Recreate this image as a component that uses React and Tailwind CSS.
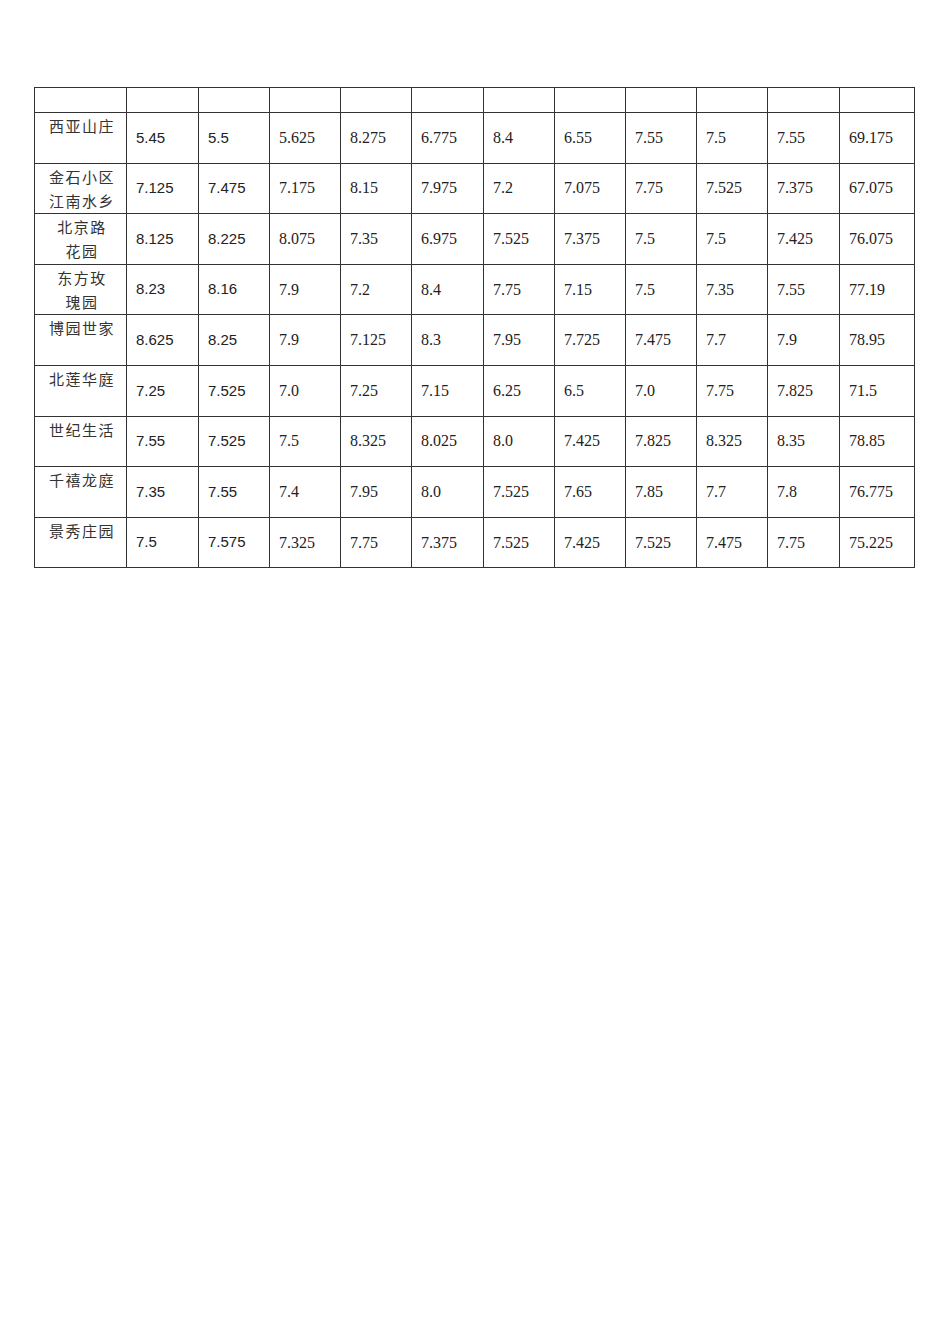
const rows = [
  [['西亚山庄'], ['5.45', '5.5', '5.625', '8.275', '6.775', '8.4', '6.55', '7.55', '7.5', '7.55', '69.175']],
  [['金石小区', '江南水乡'], ['7.125', '7.475', '7.175', '8.15', '7.975', '7.2', '7.075', '7.75', '7.525', '7.375', '67.075']],
  [['北京路', '花园'], ['8.125', '8.225', '8.075', '7.35', '6.975', '7.525', '7.375', '7.5', '7.5', '7.425', '76.075']],
  [['东方玫', '瑰园'], ['8.23', '8.16', '7.9', '7.2', '8.4', '7.75', '7.15', '7.5', '7.35', '7.55', '77.19']],
  [['博园世家'], ['8.625', '8.25', '7.9', '7.125', '8.3', '7.95', '7.725', '7.475', '7.7', '7.9', '78.95']],
  [['北莲华庭'], ['7.25', '7.525', '7.0', '7.25', '7.15', '6.25', '6.5', '7.0', '7.75', '7.825', '71.5']],
  [['世纪生活'], ['7.55', '7.525', '7.5', '8.325', '8.025', '8.0', '7.425', '7.825', '8.325', '8.35', '78.85']],
  [['千禧龙庭'], ['7.35', '7.55', '7.4', '7.95', '8.0', '7.525', '7.65', '7.85', '7.7', '7.8', '76.775']],
  [['景秀庄园'], ['7.5', '7.575', '7.325', '7.75', '7.375', '7.525', '7.425', '7.525', '7.475', '7.75', '75.225']],
];

const widths = [92, 72, 71, 71, 71, 72, 71, 71, 71, 71, 72, 75];

export default function App() {
  return (
    <div className="min-h-[1344px] w-[950px] bg-white pt-[87px] pl-[34px]">
      <table className="table-fixed border-collapse w-[880px] text-black text-[16px]">
        <colgroup>
          {widths.map((w, i) => (
            <col key={i} style={{ width: w }} />
          ))}
        </colgroup>
        <tbody>
          <tr className="h-[25px]">
            {widths.map((_, i) => (
              <td key={i} className="border border-[#333]"></td>
            ))}
          </tr>
          {rows.map(([name, vals]) => (
            <tr key={name.join('')} className="h-[50.6px]">
              <td className="border border-[#333] align-top text-center pl-[8px] pr-[5px] pt-[1px] leading-[24px] font-['Noto_Sans_CJK_SC',sans-serif] text-[15px] text-[#333] tracking-[1.5px] whitespace-nowrap">
                {name.map((line) => (
                  <div key={line}>{line}</div>
                ))}
              </td>
              {vals.map((v, i) => (
                <td
                  key={i}
                  className={
                    'border border-[#333] align-middle pl-[9px] ' +
                    (i < 2
                      ? "font-['Liberation_Sans',Arial,sans-serif] text-[15px] text-[#222]"
                      : "font-['Liberation_Serif','Times_New_Roman',serif] text-[16px] text-[#222]")
                  }
                >
                  {v}
                </td>
              ))}
            </tr>
          ))}
        </tbody>
      </table>
    </div>
  );
}
